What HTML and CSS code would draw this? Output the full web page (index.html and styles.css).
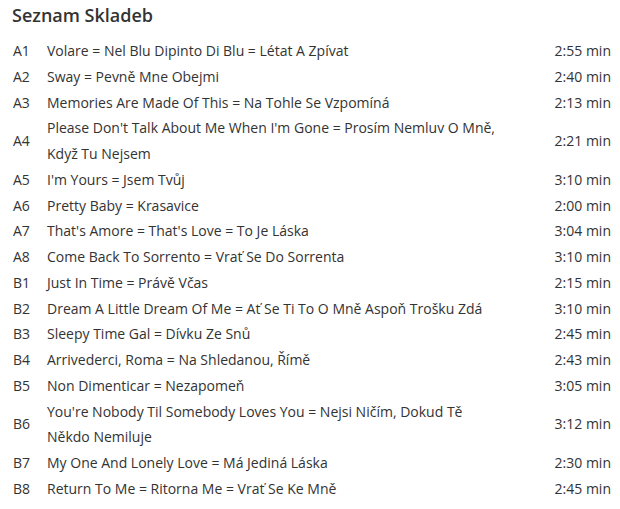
FILE: index.html
```html
<!DOCTYPE html>
<html>
<head>
<meta charset="utf-8">
<link rel="stylesheet" href="styles.css">
</head>
<body>
<div class="tracklist">
  <h2 class="heading">Seznam Skladeb</h2>
  <ol class="tracks">
    <li class="track"><span class="pos">A1</span><span class="title">Volare = Nel Blu Dipinto Di Blu = Létat A Zpívat</span><span class="dur">2:55 min</span></li>
    <li class="track"><span class="pos">A2</span><span class="title">Sway = Pevně Mne Obejmi</span><span class="dur">2:40 min</span></li>
    <li class="track"><span class="pos">A3</span><span class="title">Memories Are Made Of This = Na Tohle Se Vzpomíná</span><span class="dur">2:13 min</span></li>
    <li class="track"><span class="pos">A4</span><span class="title">Please Don't Talk About Me When I'm Gone = Prosím Nemluv O Mně, Když Tu Nejsem</span><span class="dur">2:21 min</span></li>
    <li class="track"><span class="pos">A5</span><span class="title">I'm Yours = Jsem Tvůj</span><span class="dur">3:10 min</span></li>
    <li class="track"><span class="pos">A6</span><span class="title">Pretty Baby = Krasavice</span><span class="dur">2:00 min</span></li>
    <li class="track"><span class="pos">A7</span><span class="title">That's Amore = That's Love = To Je Láska</span><span class="dur">3:04 min</span></li>
    <li class="track"><span class="pos">A8</span><span class="title">Come Back To Sorrento = Vrať Se Do Sorrenta</span><span class="dur">3:10 min</span></li>
    <li class="track"><span class="pos">B1</span><span class="title">Just In Time = Právě Včas</span><span class="dur">2:15 min</span></li>
    <li class="track"><span class="pos">B2</span><span class="title">Dream A Little Dream Of Me = Ať Se Ti To O Mně Aspoň Trošku Zdá</span><span class="dur">3:10 min</span></li>
    <li class="track"><span class="pos">B3</span><span class="title">Sleepy Time Gal = Dívku Ze Snů</span><span class="dur">2:45 min</span></li>
    <li class="track"><span class="pos">B4</span><span class="title">Arrivederci, Roma = Na Shledanou, Římě</span><span class="dur">2:43 min</span></li>
    <li class="track"><span class="pos">B5</span><span class="title">Non Dimenticar = Nezapomeň</span><span class="dur">3:05 min</span></li>
    <li class="track"><span class="pos">B6</span><span class="title">You're Nobody Til Somebody Loves You = Nejsi Ničím, Dokud Tě Někdo Nemiluje</span><span class="dur">3:12 min</span></li>
    <li class="track"><span class="pos">B7</span><span class="title">My One And Lonely Love = Má Jediná Láska</span><span class="dur">2:30 min</span></li>
    <li class="track"><span class="pos">B8</span><span class="title">Return To Me = Ritorna Me = Vrať Se Ke Mně</span><span class="dur">2:45 min</span></li>
  </ol>
</div>
</body>
</html>
```
FILE: styles.css
```css
html, body {
  margin: 0;
  padding: 0;
  background: #fff;
}
body {
  font-family: "Open Sans", "Liberation Sans", sans-serif;
  color: #333;
  font-size: 14px;
}
.tracklist {
  padding: 2px 9px 0 12px;
}
.heading {
  margin: 0;
  font-size: 18px;
  font-weight: 600;
  line-height: 26px;
  height: 36px;
  color: #333;
}
.tracks {
  list-style: none;
  margin: 0;
  padding: 0;
}
.track {
  display: grid;
  grid-template-columns: 35px 460px 1fr;
  align-items: center;
  line-height: 25.75px;
}
.pos {
  padding-left: 1px;
}
.dur {
  text-align: right;
}
```
